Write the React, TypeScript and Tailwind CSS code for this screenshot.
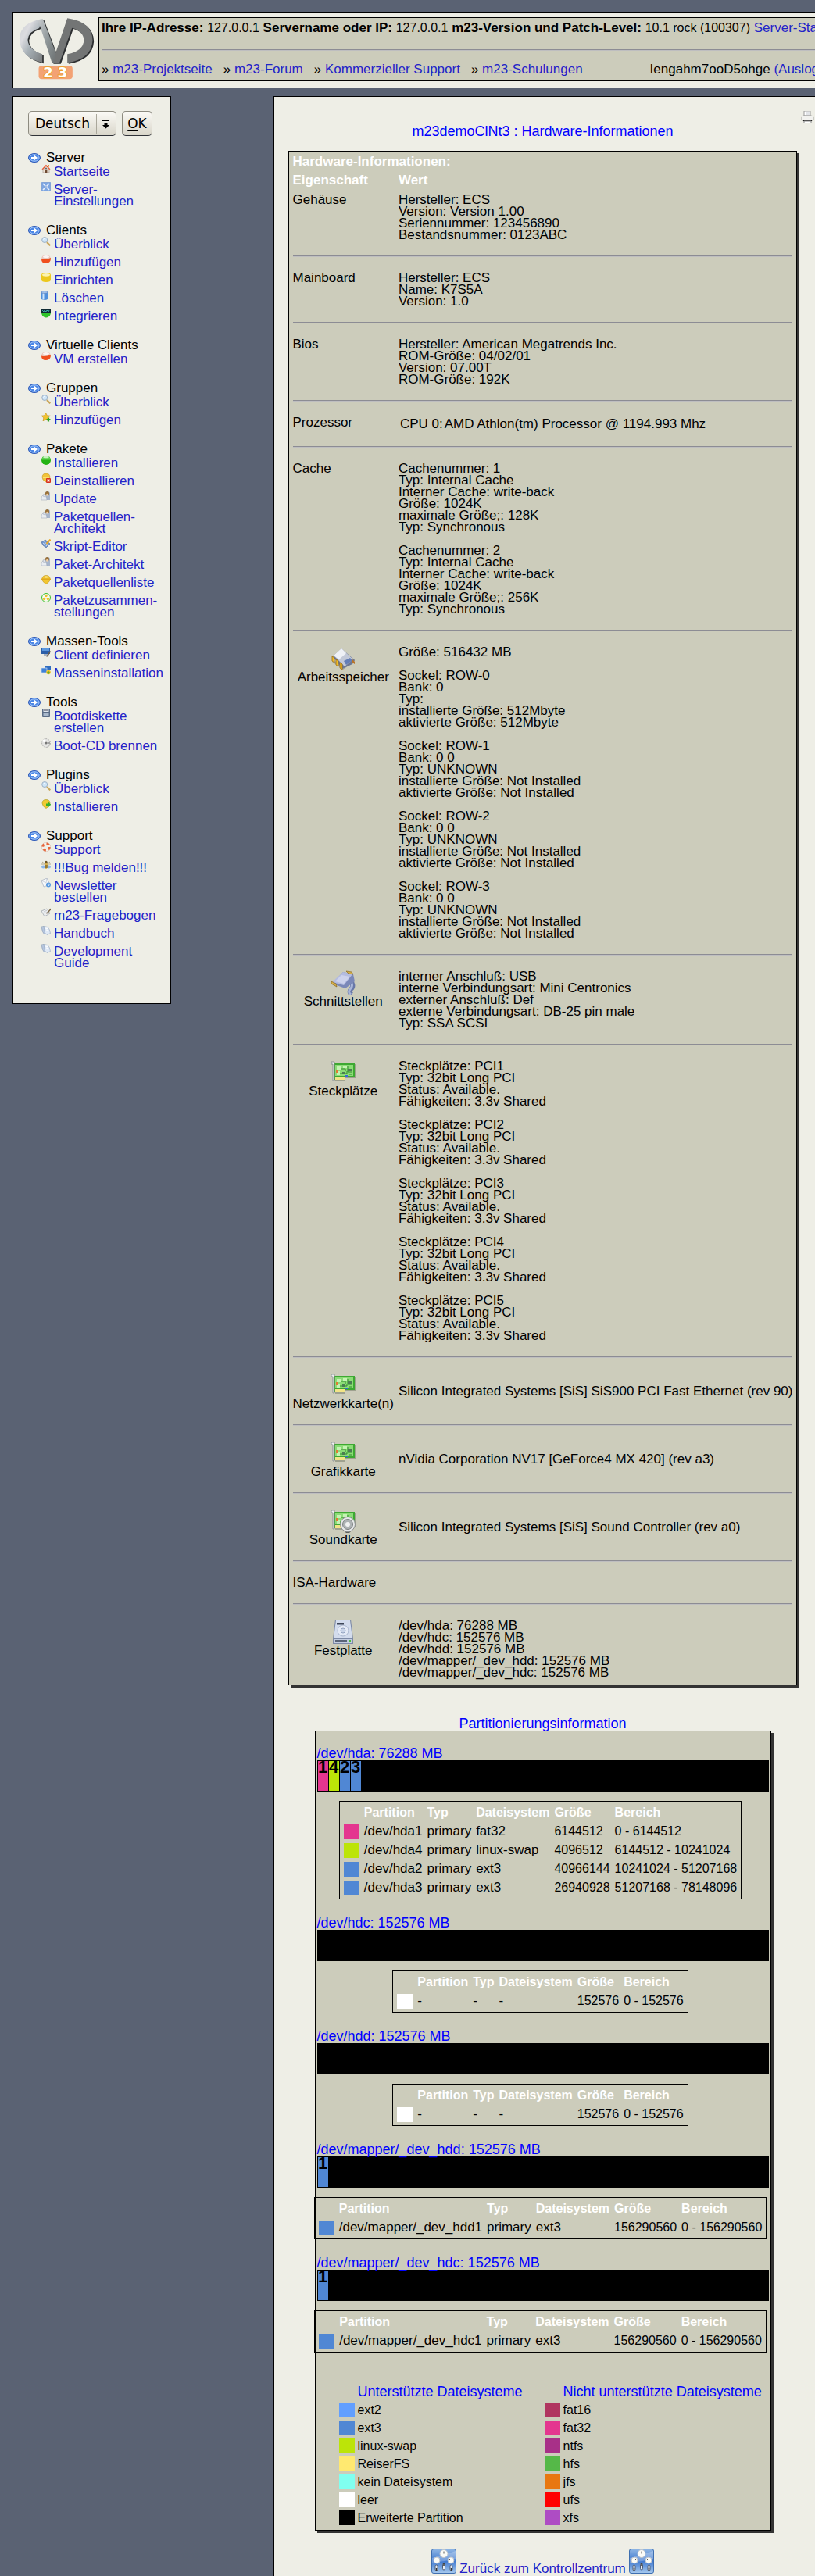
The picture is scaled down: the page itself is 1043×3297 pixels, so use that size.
import React from "react";

type IconName =
  | "home" | "gear" | "search" | "red" | "yellow" | "trash" | "integrate" | "star" | "green"
  | "remove" | "people" | "script" | "helmet" | "collection" | "client" | "mass" | "floppy"
  | "cd" | "plugin" | "lifebuoy" | "bug" | "news" | "form" | "book";

function drawing(name: IconName) {
  switch (name) {
    case "home":
      return (<><path d="M2 6h8v5H2z" fill="#f1e6d8" stroke="#9a8f86" strokeWidth=".6" /><path d="M0.5 6.5 6 0.8l5.500 5.700-1 .6L6 3 1.500 7z" fill="#e8542c" /><path d="M8.500 1h1.500v3l-1.500-1.500z" fill="#e88c2c" /><path d="M5 7.500h2.400V11H5z" fill="#6d4a32" /><circle cx="6" cy="5.500" r=".9" fill="#555" /></>);
    case "gear":
      return (<><rect width="12" height="12" rx="1" fill="#7da6e2" /><rect x=".5" y=".5" width="11" height="11" rx="1" fill="none" stroke="#86a4d4" /><path d="M2 2l3 3M10 2 7 5M2 10l3-3M10 10 7 7" stroke="#e9f1fc" strokeWidth="1.600" /><circle cx="6" cy="6" r="1.600" fill="#f4f8fe" /><circle cx="6" cy="6" r=".8" fill="#4370b8" /></>);
    case "search":
      return (<><path d="m7 7 4.300 4.300" stroke="#c9a65a" strokeWidth="2.200" /><circle cx="4.200" cy="4" r="3.500" fill="#cfe6f8" stroke="#9db1c6" strokeWidth="1" /><path d="M2.500 3.500q1-1.500 2.500-1.500" stroke="#fff" fill="none" /></>);
    case "red":
      return (<><ellipse cx="6" cy="5.500" rx="6" ry="5.500" fill="#e9c9be" /><path d="M0 5.500Q6 7 12 4 12 11 6 11 0 11 0 5.500z" fill="#f0501e" /><ellipse cx="6" cy="2.500" rx="4" ry="1.600" fill="#fff" opacity=".8" /></>);
    case "yellow":
      return (<><path d="M0 3q0-3 6-3t6 3v6q0 3-6 3T0 9z" fill="#ecc81e" /><ellipse cx="6" cy="2.800" rx="5" ry="1.900" fill="#fbf3b0" /></>);
    case "trash":
      return (<><path d="M0 2h8v9q-4 2-8 0z" fill="#4f8fdc" /><path d="M1.500 3v8.500h2V3z" fill="#cfe4fa" /><ellipse cx="4" cy="2" rx="4" ry="1.500" fill="#a5c4ec" stroke="#466fae" strokeWidth=".5" /></>);
    case "integrate":
      return (<><path d="M0 0h12v6H0z" fill="#0f2a33" /><path d="M1 2l2 2 1-2 2 2 1-2 2 2 1-2" stroke="#49c4c8" fill="none" strokeWidth=".8" /><path d="M0 6h12q-.5 3-3 4.500-3 2-6 0Q.5 9 0 6z" fill="#2fc42a" /></>);
    case "star":
      return (<><path d="m5.500 0 1.700 3.700 4 .5-3 2.600.9 4-3.600-2L2 10.800l.8-4L0 4.200l3.900-.5z" fill="#f2c42e" stroke="#c08a1a" strokeWidth=".6" /><path d="M9 6.500v5M6.500 9h5" stroke="#2da52a" strokeWidth="2.200" /></>);
    case "green":
      return (<><ellipse cx="6" cy="6" rx="6" ry="6" fill="#24b314" /><path d="M.5 5.500h11Q11 0 6 0 1 0 .5 5.500z" fill="#5fd152" /><ellipse cx="6" cy="2" rx="3.800" ry="1.300" fill="#c8f2c0" /></>);
    case "remove":
      return (<><path d="M1 5q0-5 5-5t5 5l-1 3-4 3-4-3z" fill="#f2c437" stroke="#b98c20" strokeWidth=".5" /><path d="M2 5h8" stroke="#fff3b0" /><rect x="6" y="6" width="6" height="6" rx="1" fill="#d8321c" /><path d="M7.600 7.600l2.800 2.800m0-2.800-2.800 2.800" stroke="#fff" strokeWidth="1.200" /></>);
    case "people":
      return (<><path d="M5 3q0-3 3-3t3 3v8H6z" fill="#a8b6cc" /><circle cx="7.500" cy="2.500" r="2.500" fill="#9a7138" /><circle cx="7.500" cy="4.300" r="1.500" fill="#f0cfa6" /><path d="M0 11q-.5-6 3-6t4 6z" fill="#e9edf2" stroke="#98a2b2" strokeWidth=".5" /><circle cx="3.500" cy="5" r="1.600" fill="#dfe3ea" stroke="#8e98a8" strokeWidth=".5" /></>);
    case "script":
      return (<><path d="m0 4 5-3 6 5-5 5-4-3z" fill="#7398cf" stroke="#4a6699" strokeWidth=".6" /><path d="m2 5 5 4M3.500 3.500l5 4" stroke="#cddcf1" /><path d="M11.500.5 6.500 6" stroke="#e9a928" strokeWidth="2" /></>);
    case "helmet":
      return (<><path d="M1 5q0-4.500 5-4.500T11 5L9.500 9 6 11.500 2.500 9z" fill="#f2c62f" stroke="#c3961d" strokeWidth=".6" /><path d="M0 4.500h12v1.500H0z" fill="#e0a81e" /><ellipse cx="6" cy="2.500" rx="2.500" ry="1" fill="#fff5b8" /></>);
    case "collection":
      return (<><circle cx="6" cy="6" r="5.500" fill="#f6fbf0" stroke="#3bbf2a" strokeWidth="1" /><circle cx="6" cy="3.500" r="1.700" fill="#efc12c" /><circle cx="3.600" cy="7.500" r="1.700" fill="#efc12c" /><circle cx="8.400" cy="7.500" r="1.700" fill="#efc12c" /></>);
    case "client":
      return (<><rect x="0" y="0" width="11" height="8" fill="#2b5ea8" /><path d="M1 1h9v3H1z" fill="#5a97de" /><path d="M3 8h5v2H3z" fill="#aab2bd" /><path d="M11 4 7 10l-.5 2 1.800-1L12 5z" fill="#6b5a48" /></>);
    case "mass":
      return (<><rect x="4" y="0" width="8" height="6" fill="#2f6dc0" /><rect x="0" y="3" width="7" height="6" fill="#3f82d8" stroke="#dfe8f5" strokeWidth=".6" /><circle cx="9" cy="8.500" r="2.800" fill="#efc12c" /><path d="M9 7v4M7 9h4" stroke="#3aa52a" /></>);
    case "floppy":
      return (<><rect x="1" y="0" width="10" height="11" rx="1" fill="#5a6c86" /><rect x="2.500" y="0" width="7" height="4" fill="#dfe6ee" /><rect x="2.500" y="5.500" width="7" height="4.500" fill="#a9b9cc" /><path d="M3 2h5" stroke="#445" /></>);
    case "cd":
      return (<><circle cx="6" cy="6" r="5.400" fill="#e6e6e4" stroke="#8f8f8f" strokeWidth=".7" strokeDasharray="2 1" /><path d="M6 6 1 4q1-3 4-3z" fill="#fff" /><path d="M6 6l5-1.500v3z" fill="#a0a0a0" /><circle cx="6" cy="6" r="1.500" fill="#777" /></>);
    case "plugin":
      return (<><path d="M1 5q0-4.500 5-4.500T11 5L9.500 9 6 11.500 2.500 9z" fill="#f0cb33" stroke="#a8941d" strokeWidth=".6" /><path d="M6 7V5.500h3V3.500l3.200 3.200L9 10V8H6z" fill="#35b02c" /></>);
    case "lifebuoy":
      return (<><circle cx="6" cy="6" r="4.300" fill="none" stroke="#f4efe9" strokeWidth="3" /><circle cx="6" cy="6" r="4.300" fill="none" stroke="#e8653a" strokeWidth="3" strokeDasharray="3.400 3.350" /><circle cx="6" cy="6" r="5.800" fill="none" stroke="#cfa28e" strokeWidth=".4" /></>);
    case "bug":
      return (<><ellipse cx="2.500" cy="8.500" rx="2.500" ry="2" fill="#8db8e8" /><ellipse cx="9.500" cy="8.500" rx="2.500" ry="2" fill="#8db8e8" /><path d="M1 2l4 3M11 2 7 5M0 5h12" stroke="#8a7a4a" strokeWidth=".6" /><ellipse cx="6" cy="7" rx="2" ry="4" fill="#d9b24a" /><circle cx="6" cy="2.500" r="1.700" fill="#6b5423" /><path d="M4.200 7h3.600M4.200 9h3.600" stroke="#55431c" /></>);
    case "news":
      return (<><path d="m0 3 7-3 4 8-8 3z" fill="#f7f9fc" stroke="#a5aebb" strokeWidth=".7" /><path d="m0 3 6 3 1-6" fill="none" stroke="#b5bfcd" strokeWidth=".6" /><circle cx="9" cy="8.500" r="3" fill="#5b9be0" /><path d="M8 7.500q1.500-1 2 .5T8.500 10" stroke="#e3f0fc" fill="none" /></>);
    case "form":
      return (<><path d="m0 4 7-3 4 6-7 4z" fill="#eceef0" stroke="#9aa0a8" strokeWidth=".7" /><path d="m3 5 4-1.800M4 7l4-2" stroke="#b5bac2" strokeWidth=".7" /><path d="M12 .5 7 6l-.6 1.800L8.300 7 12 2.500z" fill="#7a6546" /></>);
    case "book":
      return (<><path d="M0 1l3-.5L6 9l-2 2q-3-2-4-10z" fill="#b6c6de" stroke="#7f90ab" strokeWidth=".5" /><path d="m3 .5 5 1q3 3 3.500 8L7 11.500 4.500 9z" fill="#dfe9f6" stroke="#8fa1bd" strokeWidth=".6" /><path d="m5 3 3 .6M6 5l3 .6" stroke="#fff" /></>);
  }
}

function MenuIcon({ name }: { name: IconName }) {
  return (
    <svg viewBox="0 0 12 12" className="mt-[-2px] mr-1 h-3 w-3 shrink-0" aria-hidden="true">
      {drawing(name)}
    </svg>
  );
}

function Bullet() {
  return (
    <svg viewBox="0 0 16 12" className="mr-[7px] h-3 w-4 shrink-0" aria-hidden="true">
      <ellipse cx="8" cy="6" rx="7.500" ry="5.500" fill="#4c87e6" stroke="#2b55b4" />
      <ellipse cx="8" cy="6" rx="6" ry="4.200" fill="none" stroke="#a9cbf8" />
      <path d="M4 5h4V2.800L12 6 8 9.200V7H4z" fill="#fff" />
    </svg>
  );
}

function Logo() {
  return (
    <svg viewBox="70 66 290 240" className="mt-[6px] ml-2 h-20 w-[97px] shrink-0 overflow-visible" role="img" aria-label="m23">
      <defs>
        <linearGradient id="arc" x1="0" x2="1" y1="0" y2="1">
          <stop offset="0" stopColor="#c9cdd1" />
          <stop offset=".3" stopColor="#dcdce0" />
          <stop offset=".55" stopColor="#a9b2b8" />
          <stop offset="1" stopColor="#777a7b" />
        </linearGradient>
        <linearGradient id="leg" x1="0" x2="1" y1="0" y2="1">
          <stop offset="0" stopColor="#c8cbce" />
          <stop offset=".5" stopColor="#8f9799" />
          <stop offset="1" stopColor="#6c7071" />
        </linearGradient>
      </defs>
      <g fill="#2d2f31" transform="translate(5 4)">
        <path d="M158 73Q76 88 72 147q2 74 88 93v-32q-54-18-56-56 4-32 44-44z" />
        <path d="M146 75 162 73 211 203 256 70Q352 84 353 155q-5 72-97 86v-33q62-12 64-55-4-34-46-46L226 241h-28z" />
      </g>
      <path d="M158 73Q76 88 72 147q2 74 88 93v-32q-54-18-56-56 4-32 44-44z" fill="url(#arc)" />
      <path d="M211 203 256 70Q352 84 353 155q-5 72-97 86v-33q62-12 64-55-4-34-46-46L226 241h-28z" fill="#737575" />
      <path d="M143 76 162 73 212 203 204 241h-7z" fill="url(#leg)" />
      <rect x="146" y="252" width="130" height="52" rx="12" fill="#f3a274" />
      <g fontFamily="DejaVu Sans" fontWeight="bold" fontSize="54" strokeLinejoin="round" paintOrder="stroke" fill="#fff" stroke="#eda02e" strokeWidth="6">
        <text x="163" y="298">2</text>
        <text x="219" y="298">3</text>
      </g>
    </svg>
  );
}

function Printer() {
  return (
    <svg viewBox="0 0 17 16" className="h-4 w-[17px]" role="img" aria-label="Drucken">
      <path d="M4 0h8v6H4z" fill="#fff" stroke="#9a9a9a" />
      <path d="M6 2h5M6 4h5" stroke="#c4c8d0" />
      <path d="M1 8q1-2 3-2h9q2 0 3 2v4H1z" fill="#f2f2ef" stroke="#a5a5a2" />
      <path d="M3 12.500h11" stroke="#222" strokeWidth="1.200" />
      <path d="M4 13h9v2.500H4z" fill="#fff" stroke="#8b8b8b" />
    </svg>
  );
}

function Chip() {
  return (
    <svg viewBox="0 0 32 32" className="h-8 w-8" aria-hidden="true">
      <path d="M2 20 16 30l14-10 1-3z" fill="#8b8d84" opacity=".6" />
      <path d="M14 3 31 18l-3 5-13 6L3 13z" fill="#6d7894" />
      <path d="M14 3 29 17l-11 9L4 12z" fill="#c3c9d8" />
      <path d="M14 3 20 9 11 17 4 12z" fill="#eff1f6" />
      <path d="M17 19l8-4 3 3-8 6z" fill="#3c5ea8" opacity=".7" />
      <path d="M2 13v6l3 2v-6zM7 17v7l3 2v-7zM12 21v7l3 2v-7z" fill="#f0bd2c" stroke="#9b6b12" strokeWidth=".8" />
      <path d="M28 17l3 3v3l-3-2z" fill="#b8742a" />
    </svg>
  );
}

function Plug() {
  return (
    <svg viewBox="0 0 32 32" className="h-8 w-8" aria-hidden="true">
      <path d="M25 12q6 8 1 12-3 4 1 7" fill="none" stroke="#6877a8" strokeWidth="6" />
      <path d="M25 12q5 8 0 12-3 4 1 7" fill="none" stroke="#a9b6da" strokeWidth="3" />
      <path d="M16 2 29 5l2 9-12 9L2 17z" fill="#7b88b8" />
      <path d="M16 2 28 5 17 19 2 15z" fill="#b4bce0" />
      <path d="m14 6 11 2-8 9L6 14z" fill="#cdd2ec" />
      <path d="m20 1 7 1 2 3-6-1zM1 14l6 3 1 4-7-4z" fill="#d6b04a" stroke="#876520" strokeWidth=".7" />
    </svg>
  );
}

function Card({ speaker = false }: { speaker?: boolean }) {
  return (
    <svg viewBox="0 0 32 32" className="h-8 w-8" aria-hidden="true">
      <path d="M4 5h28v18H19v4H6V8z" fill="#8a8e7c" opacity=".7" />
      <path d="M4 4h27v18H18v3H4z" fill="#3da832" />
      <path d="M6 6h23v14H6z" fill="#8bdc76" />
      <path d="M8 8h6v4H8zM16 7h5v3h-5zM8 14h4v5H8z" fill="#c6f2b4" />
      <path d="M14 11h5v3M22 8v7h6M12 17h9v-3M24 18h4" fill="none" stroke="#2f8a2a" strokeWidth="1" />
      <path d="M22 11h6v3h-6zM15 15h4v3h-4z" fill="#4b7d52" />
      <path d="M19 19h3v2h-3z" fill="#3867d6" />
      <path d="M7 12h2v4H7z" fill="#e07b32" />
      <path d="M6 21h12v4H6z" fill="#f2e487" />
      <path d="M1 2h4v24H3V5H1z" fill="#eceeee" stroke="#7f8486" strokeWidth=".8" />
      {speaker && (
        <g>
          <path d="M13 24q8 8 18 0l-7 7h-4z" fill="#5b5d5a" />
          <circle cx="22" cy="20" r="9.500" fill="#e6e8e8" stroke="#8b8e8e" />
          <circle cx="22" cy="20" r="6.500" fill="#aeb3b4" stroke="#7d8182" />
          <circle cx="22" cy="20" r="3" fill="#f0f1f1" />
        </g>
      )}
    </svg>
  );
}

function Disk() {
  return (
    <svg viewBox="0 0 32 32" className="h-8 w-8" aria-hidden="true">
      <path d="M6 0h20l3 24v7H3v-7z" fill="#7d8aa6" />
      <path d="M7 1h18l3 23H4z" fill="#d3dced" />
      <circle cx="16" cy="14" r="7" fill="#e4eaf6" stroke="#a9b6cf" />
      <circle cx="16" cy="14" r="3" fill="#c9d4e8" stroke="#93a3c0" />
      <path d="M8 4h9v2.500H8z" fill="#3d4658" />
      <path d="M4 25h24v5H4z" fill="#c3cde0" />
      <path d="M6 26h15v2.500H6z" fill="#5a6478" />
      <path d="M23 26h3v2.500h-3z" fill="#49c23a" />
    </svg>
  );
}

function ControlPanel() {
  return (
    <svg viewBox="0 0 32 32" className="h-8 w-8 shrink-0" aria-hidden="true">
      <defs>
        <linearGradient id="panel" x1="0" x2="0" y1="0" y2="1">
          <stop offset="0" stopColor="#8fb6e4" />
          <stop offset=".5" stopColor="#3f78cf" />
          <stop offset="1" stopColor="#a8cbef" />
        </linearGradient>
      </defs>
      <rect x=".5" y=".5" width="31" height="31" rx="2.500" fill="url(#panel)" stroke="#3f6fb0" />
      <path d="M1 12Q16 9 31 3v10Q16 17 1 18z" fill="#fff" opacity=".25" />
      <g fill="#fbfbf7" stroke="#c0c5cb">
        <circle cx="16" cy="6.500" r="5" />
        <circle cx="7" cy="15" r="4" />
        <circle cx="25" cy="15" r="4" />
      </g>
      <path d="M16 6.500V3.500M7 15l2-2M25 15l-2-2" stroke="#555" />
      <g fill="#e9edf2" stroke="#4c5c76">
        <rect x="5" y="21" width="3" height="7" rx="1.500" />
        <rect x="14.500" y="19" width="3" height="8" rx="1.500" />
        <rect x="24" y="21" width="3" height="7" rx="1.500" />
      </g>
      <path d="M6.500 25v3M16 19v3M25.500 25v3" stroke="#333" strokeWidth="1.500" />
    </svg>
  );
}

const menu: { title: string; items: [IconName, string][] }[] = [
  { title: "Server", items: [["home", "Startseite"], ["gear", "Server-\nEinstellungen"]] },
  { title: "Clients", items: [["search", "Überblick"], ["red", "Hinzufügen"], ["yellow", "Einrichten"], ["trash", "Löschen"], ["integrate", "Integrieren"]] },
  { title: "Virtuelle Clients", items: [["red", "VM erstellen"]] },
  { title: "Gruppen", items: [["search", "Überblick"], ["star", "Hinzufügen"]] },
  {
    title: "Pakete",
    items: [["green", "Installieren"], ["remove", "Deinstallieren"], ["people", "Update"], ["people", "Paketquellen-\nArchitekt"], ["script", "Skript-Editor"], ["people", "Paket-Architekt"], ["helmet", "Paketquellenliste"], ["collection", "Paketzusammen-\nstellungen"]],
  },
  { title: "Massen-Tools", items: [["client", "Client definieren"], ["mass", "Masseninstallation"]] },
  { title: "Tools", items: [["floppy", "Bootdiskette\nerstellen"], ["cd", "Boot-CD brennen"]] },
  { title: "Plugins", items: [["search", "Überblick"], ["plugin", "Installieren"]] },
  {
    title: "Support",
    items: [["lifebuoy", "Support"], ["bug", "!!!Bug melden!!!"], ["news", "Newsletter\nbestellen"], ["form", "m23-Fragebogen"], ["book", "Handbuch"], ["book", "Development\nGuide"]],
  },
];

function Sidebar() {
  return (
    <aside className="w-[204px] shrink-0 border border-black bg-[#eeeee6] pt-[18px] pb-11 pl-5">
      <form className="flex gap-[7px]" onSubmit={(e) => e.preventDefault()}>
        <label htmlFor="lang" className="sr-only">Sprache</label>
        <div className="relative">
          <select
            id="lang"
            className="h-8 w-[113px] appearance-none rounded-[5px] border border-[#8d8b80] border-b-[#2f3238] bg-linear-to-b from-[#fbfaf6] to-[#d9d6ca] pl-2 font-['DejaVu_Sans',sans-serif] text-[17px] leading-7 text-black"
          >
            <option>Deutsch</option>
            <option>English</option>
          </select>
          <svg viewBox="0 0 24 26" className="pointer-events-none absolute top-1 right-1 h-[26px] w-6" aria-hidden="true">
            <path d="M.5 0v25M2.500 0v25M4.500 0v25" stroke="#aaa79b" />
            <path d="M10 8.500h9" stroke="#000" />
            <path d="M12.500 11h4v3H19l-4.500 4.500L10 14h2.500z" />
          </svg>
        </div>
        <button
          type="submit"
          className="h-8 w-[39px] rounded-[5px] border border-[#8d8b80] border-b-[#2f3238] bg-linear-to-b from-[#fbfaf6] to-[#d9d6ca] font-['DejaVu_Sans',sans-serif] text-[17px] leading-7"
        >
          <span className="underline underline-offset-3">O</span>K
        </button>
      </form>
      <nav className="mt-[19px] flex flex-col gap-[21px]">
        {menu.map((section) => (
          <section key={section.title}>
            <h2 className="flex items-center leading-[18px]">
              <Bullet />
              {section.title}
            </h2>
            <ul className="flex flex-col gap-2 pt-px pl-[17px]">
              {section.items.map(([icon, label], i) => (
                <li key={i} className="flex items-start leading-[15px]">
                  <MenuIcon name={icon} />
                  <a href="#" className="whitespace-pre text-[#2323c8]">{label}</a>
                </li>
              ))}
            </ul>
          </section>
        ))}
      </nav>
    </aside>
  );
}

const sockets = [1, 2, 3]
  .map((n) => `Sockel: ROW-${n}\nBank: 0 0\nTyp: UNKNOWN\ninstallierte Größe: Not Installed\naktivierte Größe: Not Installed`)
  .join("\n\n");

const slots = [1, 2, 3, 4, 5]
  .map((n) => `Steckplätze: PCI${n}\nTyp: 32bit Long PCI\nStatus: Available.\nFähigkeiten: 3.3v Shared`)
  .join("\n\n");

const caches = [[1, 128], [2, 256]]
  .map(([n, max]) => `Cachenummer: ${n}\nTyp: Internal Cache\nInterner Cache: write-back\nGröße: 1024K\nmaximale Größe;: ${max}K\nTyp: Synchronous`)
  .join("\n\n");

const hardware: { name: string; icon?: React.ReactNode; value: React.ReactNode; middle?: boolean }[] = [
  { name: "Gehäuse", value: "Hersteller: ECS\nVersion: Version 1.00\nSeriennummer: 123456890\nBestandsnummer: 0123ABC" },
  { name: "Mainboard", value: "Hersteller: ECS\nName: K7S5A\nVersion: 1.0" },
  { name: "Bios", value: "Hersteller: American Megatrends Inc.\nROM-Größe: 04/02/01\nVersion: 07.00T\nROM-Größe: 192K" },
  {
    name: "Prozessor",
    value: (
      <div className="flex gap-0.5 p-0.5">
        <span>CPU 0:</span>
        <span>AMD Athlon(tm) Processor @ 1194.993 Mhz</span>
      </div>
    ),
  },
  { name: "Cache", value: caches },
  {
    name: "Arbeitsspeicher",
    icon: <Chip />,
    value: `Größe: 516432 MB\n\nSockel: ROW-0\nBank: 0\nTyp:\ninstallierte Größe: 512Mbyte\naktivierte Größe: 512Mbyte\n\n${sockets}`,
  },
  {
    name: "Schnittstellen",
    icon: <Plug />,
    value: "interner Anschluß: USB\ninterne Verbindungsart: Mini Centronics\nexterner Anschluß: Def\nexterne Verbindungsart: DB-25 pin male\nTyp: SSA SCSI",
  },
  { name: "Steckplätze", icon: <Card />, value: slots },
  { name: "Netzwerkkarte(n)", icon: <Card />, value: "Silicon Integrated Systems [SiS] SiS900 PCI Fast Ethernet (rev 90)", middle: true },
  { name: "Grafikkarte", icon: <Card />, value: "nVidia Corporation NV17 [GeForce4 MX 420] (rev a3)", middle: true },
  { name: "Soundkarte", icon: <Card speaker />, value: "Silicon Integrated Systems [SiS] Sound Controller (rev a0)", middle: true },
  { name: "ISA-Hardware", value: "" },
  {
    name: "Festplatte",
    icon: <Disk />,
    value: "/dev/hda: 76288 MB\n/dev/hdc: 152576 MB\n/dev/hdd: 152576 MB\n/dev/mapper/_dev_hdd: 152576 MB\n/dev/mapper/_dev_hdc: 152576 MB",
  },
];

function HardwareTable() {
  return (
    <div className="border border-black bg-[#ccccbb] px-0.5 pt-px pb-[3px] shadow-[3px_3px_0_#333]">
      <table className="leading-[15px]">
        <thead className="text-left leading-[18px] text-white">
          <tr><th colSpan={2} className="p-[3px]">Hardware-Informationen:</th></tr>
          <tr><th className="p-[3px]">Eigenschaft</th><th className="p-[3px]">Wert</th></tr>
        </thead>
        <tbody>
          {hardware.map((row, i) => (
            <React.Fragment key={row.name}>
              {i > 0 && (
                <tr>
                  <td colSpan={2} className="px-[3px] py-3.5">
                    <hr className="border-t border-b border-t-[#8c8c94] border-b-[#bebec0]" />
                  </td>
                </tr>
              )}
              <tr>
                <td className="px-[3px] py-[5px] align-top whitespace-nowrap">
                  {row.icon ? (
                    <div className="flex flex-col items-center">
                      {row.icon}
                      {row.name}
                    </div>
                  ) : (
                    row.name
                  )}
                </td>
                <td className={row.middle ? "px-[3px] py-[5px] align-middle whitespace-pre" : "px-[3px] py-[5px] align-top whitespace-pre"}>
                  {row.value}
                </td>
              </tr>
            </React.Fragment>
          ))}
        </tbody>
      </table>
    </div>
  );
}

const colors: Record<string, string> = {
  fat32: "bg-[#e4368f]",
  "linux-swap": "bg-[#bce408]",
  ext3: "bg-[#5087d4]",
  "-": "bg-white",
};

type Partition = [device: string, kind: string, fs: string, size: string, range: string];

const disks: { name: string; segments: [string, string][]; parts: Partition[] }[] = [
  {
    name: "/dev/hda: 76288 MB",
    segments: [["1", "fat32"], ["4", "linux-swap"], ["2", "ext3"], ["3", "ext3"]],
    parts: [
      ["/dev/hda1", "primary", "fat32", "6144512", "0 - 6144512"],
      ["/dev/hda4", "primary", "linux-swap", "4096512", "6144512 - 10241024"],
      ["/dev/hda2", "primary", "ext3", "40966144", "10241024 - 51207168"],
      ["/dev/hda3", "primary", "ext3", "26940928", "51207168 - 78148096"],
    ],
  },
  { name: "/dev/hdc: 152576 MB", segments: [], parts: [["-", "-", "-", "152576", "0 - 152576"]] },
  { name: "/dev/hdd: 152576 MB", segments: [], parts: [["-", "-", "-", "152576", "0 - 152576"]] },
  { name: "/dev/mapper/_dev_hdd: 152576 MB", segments: [["1", "ext3"]], parts: [["/dev/mapper/_dev_hdd1", "primary", "ext3", "156290560", "0 - 156290560"]] },
  { name: "/dev/mapper/_dev_hdc: 152576 MB", segments: [["1", "ext3"]], parts: [["/dev/mapper/_dev_hdc1", "primary", "ext3", "156290560", "0 - 156290560"]] },
];

const legend: { title: string; entries: [string, string][] }[] = [
  {
    title: "Unterstützte Dateisysteme",
    entries: [["bg-[#629fff]", "ext2"], ["bg-[#5087d4]", "ext3"], ["bg-[#bce408]", "linux-swap"], ["bg-[#ffe970]", "ReiserFS"], ["bg-[#80fff0]", "kein Dateisystem"], ["bg-white", "leer"], ["bg-black", "Erweiterte Partition"]],
  },
  {
    title: "Nicht unterstützte Dateisysteme",
    entries: [["bg-[#b03560]", "fat16"], ["bg-[#e4368f]", "fat32"], ["bg-[#a83088]", "ntfs"], ["bg-[#55b848]", "hfs"], ["bg-[#e87710]", "jfs"], ["bg-[#ff0000]", "ufs"], ["bg-[#ae4cc4]", "xfs"]],
  },
];

function PartitionPanel() {
  return (
    <div className="w-[584px] border border-black bg-[#ccccbb] pt-[19px] text-base shadow-[3px_3px_0_#333]">
      {disks.map((disk) => (
        <section key={disk.name} className="mb-[21px]">
          <h3 className="mx-0.5 text-lg leading-[18px] text-[#0000ff]">{disk.name}</h3>
          <div className="mx-0.5 flex h-10 gap-px bg-black p-px">
            {disk.segments.map(([label, fs]) => (
              <div key={label} className={`w-[13px] text-center text-[22px] leading-4 font-bold ${colors[fs]}`}>
                {label}
              </div>
            ))}
          </div>
          <div className="mt-3 flex justify-center pr-1.5">
            <div className="border border-black p-0.5">
              <table className="leading-[18px] whitespace-nowrap">
                <thead className="text-left text-white">
                  <tr>
                    <th className="p-[3px]" aria-label="Farbe" />
                    <th className="p-[3px]">Partition</th>
                    <th className="p-[3px]">Typ</th>
                    <th className="p-[3px]">Dateisystem</th>
                    <th className="p-[3px]">Größe</th>
                    <th className="p-[3px]">Bereich</th>
                  </tr>
                </thead>
                <tbody>
                  {disk.parts.map((part) => (
                    <tr key={part[0]}>
                      <td className="px-[3px]"><div className={`h-[19px] w-5 ${colors[part[2]]}`} /></td>
                      {part.map((cell, i) => (
                        <td key={i} className={i < 3 ? "p-[3px] text-[17px]" : "p-[3px]"}>{cell}</td>
                      ))}
                    </tr>
                  ))}
                </tbody>
              </table>
            </div>
          </div>
        </section>
      ))}
      <div className="mt-10 flex gap-7 pb-1.5 pl-[30px]">
        {legend.map((group) => (
          <section key={group.title}>
            <h3 className="mb-1 pl-6 text-lg leading-5 whitespace-nowrap text-[#0000ff]">{group.title}</h3>
            <ul className="flex flex-col gap-1">
              {group.entries.map(([color, label]) => (
                <li key={label} className="flex h-[19px] items-center gap-1 leading-[18px]">
                  <span className={`h-[19px] w-5 ${color}`} />
                  {label}
                </li>
              ))}
            </ul>
          </section>
        ))}
      </div>
    </div>
  );
}

function Header() {
  const links = ["m23-Projektseite", "m23-Forum", "Kommerzieller Support", "m23-Schulungen"];
  return (
    <header className="flex h-[98px] overflow-hidden border-y border-l border-black bg-[#eeeee6]">
      <Logo />
      <div className="mt-1.5 ml-[5px] h-[82px] flex-1 overflow-hidden border-y border-l border-black bg-[#ccccbb] pl-[3px] whitespace-nowrap">
        <p className="mt-1 h-[18px] leading-[18px]">
          <b>Ihre IP-Adresse:</b> <span className="text-[16px]">127.0.0.1</span> <b>Servername oder IP:</b>{" "}
          <span className="text-[16px]">127.0.0.1</span> <b>m23-Version und Patch-Level:</b>{" "}
          <span className="text-[16px]">10.1 rock (100307)</span>{" "}
          <a href="#" className="text-[#2323c8]">Server-Status</a>
        </p>
        <hr className="mt-[18px] border-t border-b border-t-[#8c8c94] border-b-[#bebec0]" />
        <nav className="mt-[15px] flex leading-[18px]">
          {links.map((link) => (
            <span key={link} className="mr-3.5">
              » <a href="#" className="text-[#2323c8]">{link}</a>
            </span>
          ))}
          <span className="ml-[72px]">
            Iengahm7ooD5ohge <a href="#" className="text-[#2323c8]">(Ausloggen)</a>
          </span>
        </nav>
      </div>
    </header>
  );
}

export default function App() {
  return (
    <div className="flex min-h-screen flex-col gap-2.5 overflow-hidden bg-[#5a6273] pt-[15px] pl-[15px] font-['Liberation_Sans',Arial,sans-serif] text-[17px] text-black">
      <Header />
      <div className="flex flex-1 items-start gap-[131px]">
        <Sidebar />
        <main className="flex flex-1 flex-col items-center self-stretch border-t border-l border-black bg-[#eeeee6] pt-[18px] pr-[5px]">
          <a href="#" className="-mr-1 self-end"><Printer /></a>
          <h1 className="mb-[15px] text-lg leading-5 text-[#0000ff]">m23demoClNt3 : Hardware-Informationen</h1>
          <HardwareTable />
          <h2 className="mt-10 text-lg leading-[18px] text-[#0000ff]">Partitionierungsinformation</h2>
          <PartitionPanel />
          <div className="mt-[23px] flex items-end gap-1">
            <ControlPanel />
            <a href="#" className="leading-3 text-[#2323c8]">Zurück zum Kontrollzentrum</a>
            <ControlPanel />
          </div>
        </main>
      </div>
    </div>
  );
}
